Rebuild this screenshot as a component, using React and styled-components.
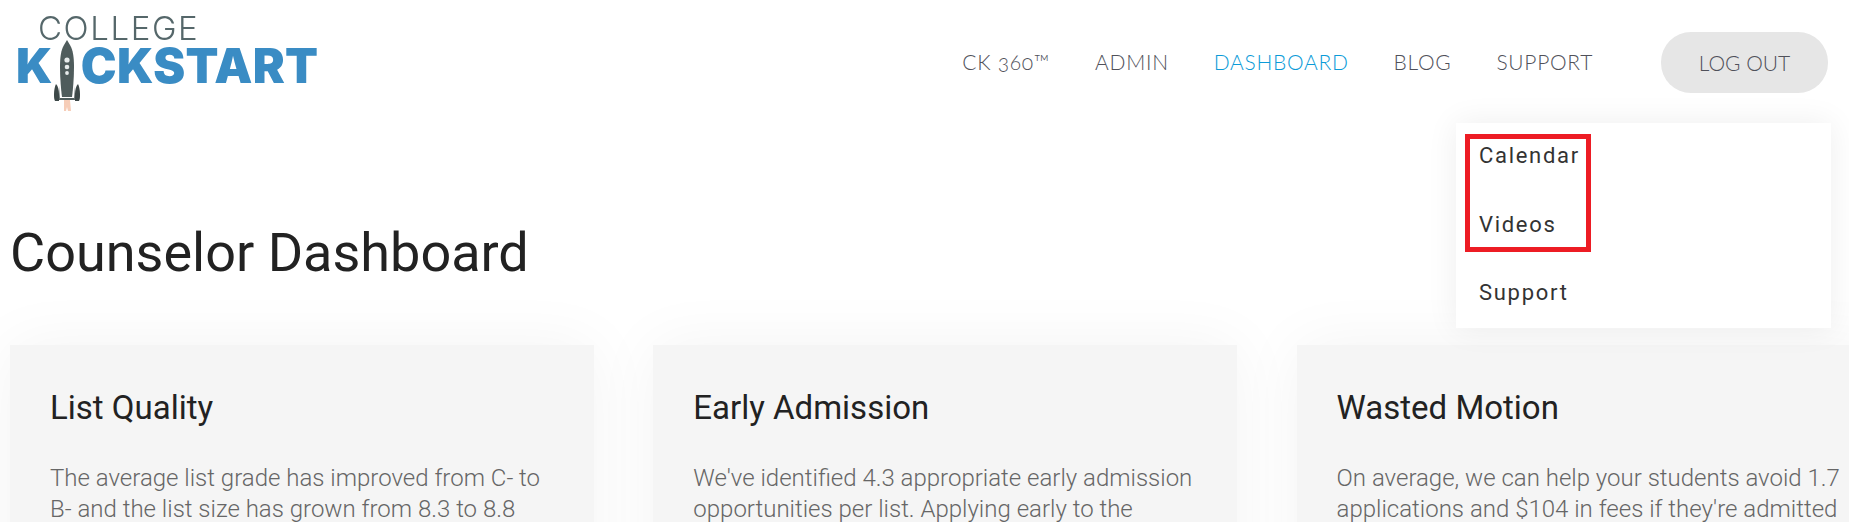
import React from "react";
import styled, { createGlobalStyle } from "styled-components";

const Global = createGlobalStyle`
  html, body { margin: 0; padding: 0; background: #fff; overflow: hidden; }
  * { box-sizing: border-box; }
`;

const Page = styled.div`
  position: relative;
  width: 1849px;
  height: 522px;
  overflow: hidden;
  font-family: Roboto, "Liberation Sans", sans-serif;
`;

const Header = styled.header`
  display: flex;
  align-items: flex-start;
  justify-content: space-between;
  height: 125px;
  padding: 14px 21px 0 16px;
`;

const Logo = styled.div`
  display: flex;
  flex-direction: column;
  font-family: Inter, "Liberation Sans", sans-serif;
  filter: blur(0.4px);
`;

const LogoTop = styled.div`
  margin-left: 22px;
  font-size: 33px;
  line-height: 28px;
  font-weight: 300;
  letter-spacing: 1.6px;
  color: #55676a;
`;

const LogoBottom = styled.div`
  display: flex;
  align-items: flex-start;
  height: 62px;
  margin-top: 2px;
  font-size: 48px;
  line-height: 44px;
  font-weight: 900;
  letter-spacing: 0.3px;
  color: #3a8cc4;
`;

const Rocket = styled.svg`
  flex: none;
  width: 30px;
  height: 72px;
  margin: -4px 0 0 -1px;
`;

const LogoRest = styled.span`
  margin-left: -1px;
`;

const NavArea = styled.div`
  display: flex;
  align-items: center;
  margin-top: 18px;
`;

const Nav = styled.nav`
  display: flex;
  align-items: center;
  gap: 45px;
  margin: -3px 68px 0 0;
`;

const NavLink = styled.a`
  font-family: Lato, "Liberation Sans", sans-serif;
  font-size: 21px;
  font-weight: 300;
  letter-spacing: 0.7px;
  font-feature-settings: "onum";
  color: ${(p) => (p.$active ? "#0b9bd8" : "#50515a")};
`;

const LogOut = styled.button`
  width: 167px;
  height: 61px;
  border: 0;
  border-radius: 30px;
  background: #e6e6e6;
  font-family: Lato, "Liberation Sans", sans-serif;
  font-size: 21px;
  font-weight: 300;
  color: #50515a;
`;

const Title = styled.h1`
  margin: 0;
  padding-left: 10px;
  height: 220px;
  padding-top: 92px;
  font-size: 54px;
  line-height: 72px;
  font-weight: 400;
  color: #222;
`;

const Cards = styled.div`
  display: grid;
  grid-template-columns: repeat(3, 583.5px);
  gap: 59.8px;
  padding-left: 10px;
`;

const Card = styled.section`
  min-height: 300px;
  padding: 41px 30px 40px 40px;
  background: #f5f5f5;
  box-shadow: 0 0 60px rgba(0, 0, 0, 0.05);
`;

const CardTitle = styled.h2`
  margin: 0 0 33px;
  font-size: 33px;
  line-height: 44px;
  font-weight: 400;
  color: #222;
`;

const CardText = styled.p`
  margin: 0;
  font-size: 24px;
  line-height: 30.7px;
  font-weight: 300;
  color: #666;
`;

const Menu = styled.div`
  position: absolute;
  top: 123px;
  left: 1456px;
  width: 375px;
  height: 205px;
  background: #fff;
  box-shadow: 0 0 30px rgba(0, 0, 0, 0.07);
`;

const MenuItem = styled.div`
  height: 68.5px;
  padding-left: 23px;
  font-size: 22px;
  line-height: 66px;
  letter-spacing: 1.7px;
  color: #333;
`;

const Highlight = styled.div`
  position: absolute;
  top: 11px;
  left: 9px;
  width: 126px;
  height: 118px;
  border: 5px solid #ed1c24;
`;

const cards = [
  ["List Quality", "The average list grade has improved from C- to B- and the list size has grown from 8.3 to 8.8"],
  ["Early Admission", "We've identified 4.3 appropriate early admission opportunities per list. Applying early to the"],
  ["Wasted Motion", "On average, we can help your students avoid 1.7 applications and $104 in fees if they're admitted"],
];

export default function App() {
  return (
    <Page>
      <Global />
      <Header>
        <Logo>
          <LogoTop>COLLEGE</LogoTop>
          <LogoBottom>
            <span>K</span>
            <Rocket viewBox="0 0 30 72" aria-hidden="true">
              <path d="M12 60h6l1 11h-3l-1-4-1 4h-2z" fill="#f6cdb8" />
              <path d="M15 0l3 5c3 5 4 12 4 22 0 12-1 22-2 30H10C9 49 8 39 8 27 8 17 9 10 12 5z" fill="#4f5c5c" />
              <path d="M4 44c2 2 3 6 3 10v7H3c-1-2-1-4-1-7 0-4 1-8 2-10zM26 44c-2 2-3 6-3 10v7h4c1-2 1-4 1-7 0-4-1-8-2-10z" fill="#3d4848" />
              <path d="M8 46v12h14V46l1 14H7z" fill="#4f5c5c" />
              <circle cx="15" cy="20" r="2.6" fill="#e8ecec" />
              <circle cx="15" cy="27" r="2.3" fill="#e8ecec" />
              <circle cx="15" cy="33" r="1.9" fill="#e8ecec" />
            </Rocket>
            <LogoRest>CKSTART</LogoRest>
          </LogoBottom>
        </Logo>
        <NavArea>
          <Nav>
            <NavLink>CK 360™</NavLink>
            <NavLink>ADMIN</NavLink>
            <NavLink $active>DASHBOARD</NavLink>
            <NavLink>BLOG</NavLink>
            <NavLink>SUPPORT</NavLink>
          </Nav>
          <LogOut>LOG OUT</LogOut>
        </NavArea>
      </Header>
      <Title>Counselor Dashboard</Title>
      <Cards>
        {cards.map(([t, b]) => (
          <Card key={t}>
            <CardTitle>{t}</CardTitle>
            <CardText>{b}</CardText>
          </Card>
        ))}
      </Cards>
      <Menu>
        <MenuItem>Calendar</MenuItem>
        <MenuItem>Videos</MenuItem>
        <MenuItem>Support</MenuItem>
        <Highlight />
      </Menu>
    </Page>
  );
}
